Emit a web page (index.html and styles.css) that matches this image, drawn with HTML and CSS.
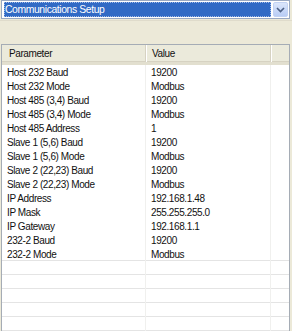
FILE: index.html
```html
<!DOCTYPE html>
<html>
<head>
<meta charset="utf-8">
<link rel="stylesheet" href="styles.css">
</head>
<body>
<div class="combo">
  <div class="combo-sel"><span class="combo-text">Communications Setup</span></div>
  <div class="combo-btn">
    <svg width="9" height="6" viewBox="0 0 9 6"><path d="M1 1 L4.5 4.5 L8 1" fill="none" stroke="#4d6185" stroke-width="1.6"/></svg>
  </div>
</div>
<div class="sep"></div>
<div class="list">
  <div class="head">
    <div class="hcell">Parameter</div>
    <div class="hcell">Value</div>
    <div class="hcell last"></div>
  </div>
  <div class="rows">
    <div class="row"><div class="cell">Host 232 Baud</div><div class="cell">19200</div><div class="cell"></div></div>
    <div class="row"><div class="cell">Host 232 Mode</div><div class="cell">Modbus</div><div class="cell"></div></div>
    <div class="row"><div class="cell">Host 485 (3,4) Baud</div><div class="cell">19200</div><div class="cell"></div></div>
    <div class="row"><div class="cell">Host 485 (3,4) Mode</div><div class="cell">Modbus</div><div class="cell"></div></div>
    <div class="row"><div class="cell">Host 485 Address</div><div class="cell">1</div><div class="cell"></div></div>
    <div class="row"><div class="cell">Slave 1 (5,6) Baud</div><div class="cell">19200</div><div class="cell"></div></div>
    <div class="row"><div class="cell">Slave 1 (5,6) Mode</div><div class="cell">Modbus</div><div class="cell"></div></div>
    <div class="row"><div class="cell">Slave 2 (22,23) Baud</div><div class="cell">19200</div><div class="cell"></div></div>
    <div class="row"><div class="cell">Slave 2 (22,23) Mode</div><div class="cell">Modbus</div><div class="cell"></div></div>
    <div class="row"><div class="cell">IP Address</div><div class="cell">192.168.1.48</div><div class="cell"></div></div>
    <div class="row"><div class="cell">IP Mask</div><div class="cell">255.255.255.0</div><div class="cell"></div></div>
    <div class="row"><div class="cell">IP Gateway</div><div class="cell">192.168.1.1</div><div class="cell"></div></div>
    <div class="row"><div class="cell">232-2 Baud</div><div class="cell">19200</div><div class="cell"></div></div>
    <div class="row lined"><div class="cell">232-2 Mode</div><div class="cell">Modbus</div><div class="cell"></div></div>
    <div class="row lined"><div class="cell"></div><div class="cell"></div><div class="cell"></div></div>
    <div class="row lined"><div class="cell"></div><div class="cell"></div><div class="cell"></div></div>
    <div class="row lined"><div class="cell"></div><div class="cell"></div><div class="cell"></div></div>
    <div class="row lined"><div class="cell"></div><div class="cell"></div><div class="cell"></div></div>
    <div class="row lined"><div class="cell"></div><div class="cell"></div><div class="cell"></div></div>
  </div>
</div>
</body>
</html>
```
FILE: styles.css
```css
html, body {
  margin: 0;
  padding: 0;
}
body {
  width: 292px;
  height: 331px;
  overflow: hidden;
  background: #ece9d8;
  font-family: "Liberation Sans", Arial, sans-serif;
  font-size: 10px;
  letter-spacing: -0.4px;
  color: #111;
}
.combo {
  display: flex;
  height: 15px;
  margin: 0 2px 0 1px;
  padding: 1px;
  border: 1px solid #9aa9c2;
  background: #fff;
}
.combo-sel {
  flex: 1;
  background: #316ac5;
  margin: 0 2px 0 1px;
  outline: 1px dotted #9fb8e6;
  outline-offset: -1px;
  display: flex;
  align-items: center;
}
.combo-text {
  color: #fff;
  padding-left: 1px;
  font-size: 10.4px;
}
.combo-btn {
  width: 13px;
  background: linear-gradient(#dbe6fb, #b9cdf5);
  border: 1px solid #c3d3f3;
  border-radius: 2px;
  display: flex;
  align-items: center;
  justify-content: center;
}
.sep {
  height: 1px;
  margin-top: 1px;
  background: #dfdbcb;
}
.list {
  margin: 23px 2px 0 1px;
  border: 1px solid #a5acb5;
  border-bottom: none;
  background: #fff;
  height: 286px;
  overflow: hidden;
}
.head {
  display: grid;
  grid-template-columns: 144px 125px 1fr;
  height: 17px;
  background: #ebeadb;
  border-bottom: 3px solid #e2dfcf;
  box-shadow: inset 0 -1px 0 #d6d2c2;
}
.hcell {
  display: flex;
  align-items: center;
  padding-left: 6px;
  border-right: 1px solid #d6d2c2;
  box-shadow: 1px 0 0 #fff;
}
.hcell:first-child {
  padding-left: 7px;
}
.hcell.last {
  border-right: none;
  box-shadow: none;
}
.row {
  display: grid;
  grid-template-columns: 144px 125px 1fr;
  height: 14px;
}
.row.lined {
  box-shadow: inset 0 -1px 0 #e4e4e4;
}
.cell {
  display: flex;
  align-items: center;
  padding-left: 5px;
  border-right: 1px solid #f0f0ee;
  white-space: nowrap;
  overflow: hidden;
}
.cell:last-child {
  border-right: none;
}
```
